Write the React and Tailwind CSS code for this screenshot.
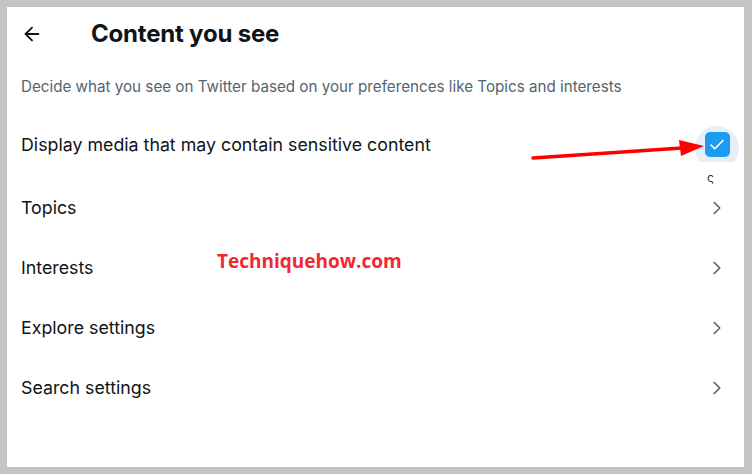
import { ArrowLeft, ChevronRight, Check } from 'lucide-react';

const rows = ['Topics', 'Interests', 'Explore settings', 'Search settings'];

export default function App() {
  return (
    <div className="h-[474px] w-[752px] bg-[#c4c4c4] pt-[7px] pl-[7px] pr-[8px] pb-[7px]" style={{ fontFamily: 'Inter, "Liberation Sans", sans-serif' }}>
      <div className="relative h-full w-full bg-white text-[#0f1419]">
        {/* header */}
        <div className="flex h-[53px] items-center">
          <div className="flex w-[84px] pl-[14px]">
            <ArrowLeft size={22} strokeWidth={2} />
          </div>
          <h1 className="text-[24px] font-bold tracking-[-0.2px]">Content you see</h1>
        </div>

        <p className="flex h-[55px] items-center pl-[14px] text-[15.2px] text-[#536471]">
          Decide what you see on Twitter based on your preferences like Topics and interests
        </p>

        {/* sensitive media */}
        <div className="flex h-[60px] items-center justify-between pl-[14px] pr-[5px]">
          <span className="text-[17.8px]">Display media that may contain sensitive content</span>
          <div className="mt-[-3px] h-[36px] w-[44px] overflow-hidden">
            <div className="flex h-[44px] w-[44px] items-center justify-center rounded-full bg-[#e8eef8]">
              <div className="mt-[-6px] flex h-[25px] w-[25px] items-center justify-center rounded-[5px] bg-[#1d9bf0]">
                <Check size={18} strokeWidth={2.2} className="text-white" />
              </div>
            </div>
          </div>
        </div>

        <div className="mt-[3px]">
          {rows.map((r) => (
            <div key={r} className="flex h-[60px] items-center justify-between pl-[14px] pr-[16px]">
              <span className="text-[17.8px]">{r}</span>
              <ChevronRight size={22} strokeWidth={1.8} className="text-[#536471]" />
            </div>
          ))}
        </div>

        {/* annotations */}
        <svg className="absolute left-0 top-0" width="744" height="467" viewBox="0 0 744 467">
          <line x1="526" y1="151" x2="675" y2="141" stroke="#f00" strokeWidth="3.5" strokeLinecap="round" />
          <polygon points="697,139 672,133 674,149" fill="#f00" />
        </svg>
        <span className="absolute left-[700px] top-[162px] text-[12px] text-[#333]">ς</span>
        <span className="absolute left-[210px] top-[240px] text-[19px] font-bold text-[#f32631]" style={{ fontFamily: '"Open Sans", sans-serif' }}>
          Techniquehow.com
        </span>
      </div>
    </div>
  );
}
